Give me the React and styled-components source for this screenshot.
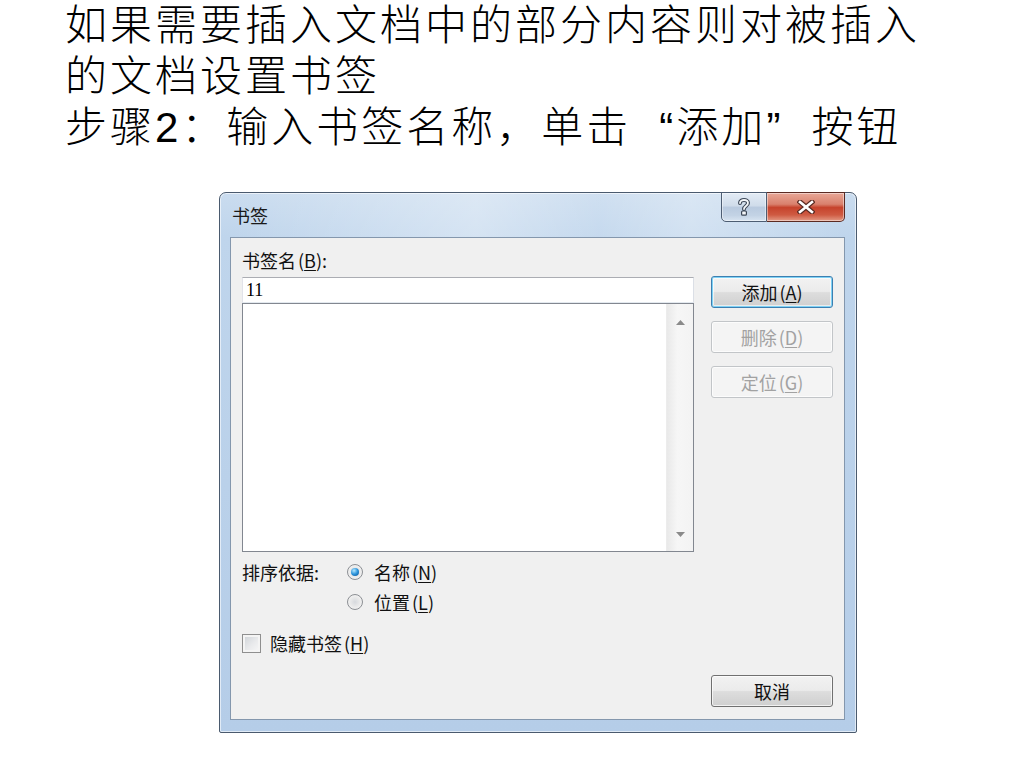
import React from "react";
import styled, { createGlobalStyle } from "styled-components";

const GlobalStyle = createGlobalStyle`
  html, body {
    margin: 0;
    padding: 0;
    background: #fff;
  }
  body {
    font-family: "Noto Sans CJK SC", "Noto Sans", sans-serif;
  }
`;

const Page = styled.div`
  width: 1024px;
  height: 768px;
  overflow: hidden;
  background: #fff;
`;

const Heading = styled.div`
  padding: 0 0 0 65px;
  font-family: "Liberation Sans", "Noto Sans CJK SC", sans-serif;
  font-size: 42px;
  font-weight: 300;
  letter-spacing: 3px;
  line-height: 51px;
  color: #000;

  span {
    display: block;
    white-space: nowrap;
  }
`;

const Quote = styled.i`
  font-style: normal;
  margin-left: ${(p) => (p.$open ? "28px" : "0")};
  margin-right: ${(p) => (p.$open ? "0" : "28px")};
`;

const Window = styled.div`
  margin: 39px 0 0 219px;
  width: 638px;
  height: 541px;
  box-sizing: border-box;
  border: 1px solid #4a5a6e;
  border-radius: 7px 7px 2px 2px;
  background: linear-gradient(180deg, #cadcef 0px, #bfd5ec 44px, #b5cde8 100%);
  box-shadow: inset 0 0 0 1px rgba(255, 255, 255, 0.6);
  padding: 0 11px 12px 10px;
  display: flex;
  flex-direction: column;
`;

const TitleBar = styled.div`
  height: 44px;
  display: flex;
  justify-content: space-between;
  align-items: flex-start;
  background: linear-gradient(
    90deg,
    rgba(255, 255, 255, 0) 0%,
    rgba(255, 255, 255, 0.35) 40%,
    rgba(255, 255, 255, 0.1) 60%,
    rgba(255, 255, 255, 0.3) 75%,
    rgba(255, 255, 255, 0) 100%
  );
`;

const Caption = styled.div`
  padding: 11px 0 0 2px;
  font-size: 18px;
  line-height: 22px;
  color: #1a1a1a;
`;

const CaptionButtons = styled.div`
  display: flex;
  margin-top: -1px;
`;

const CaptionButton = styled.div`
  height: 30px;
  width: ${(p) => (p.$close ? "78px" : "46px")};
  box-sizing: border-box;
  border: 1px solid ${(p) => (p.$close ? "#5b2a22" : "#4d5d72")};
  border-left-width: ${(p) => (p.$close ? "0" : "1px")};
  border-radius: ${(p) => (p.$close ? "0 0 5px 0" : "0 0 0 5px")};
  background: ${(p) =>
    p.$close
      ? "linear-gradient(180deg, #e8a797 0%, #d9816d 40%, #c6432c 52%, #cf5a42 78%, #e39a85 100%)"
      : "linear-gradient(180deg, #e3ebf5 0%, #d0dcea 45%, #b9cadf 52%, #c3d3e5 80%, #d8e4f1 100%)"};
  box-shadow: inset 0 0 0 1px rgba(255, 255, 255, 0.45);
  display: flex;
  align-items: center;
  justify-content: center;
`;

const Client = styled.div`
  flex: 1;
  display: flex;
  gap: 17px;
  background: #f0f0f0;
  border: 1px solid #8497ad;
  padding: 0 11px 12px 11px;
  font-size: 18px;
  color: #111;
`;

const LeftCol = styled.div`
  width: 452px;
  display: flex;
  flex-direction: column;
  padding-top: 12px;
`;

const FieldLabel = styled.div`
  line-height: 20px;
  margin-bottom: 7px;
`;

const Key = styled.span`
  margin-left: 2px;

  u {
    text-decoration: underline;
    text-underline-offset: 2px;
  }
`;

const TextBox = styled.div`
  height: 26px;
  box-sizing: border-box;
  border: 1px solid;
  border-color: #abadb3 #dbdfe6 #e3e9ef #e2e3ea;
  background: #fff;
  padding-left: 3px;
  font-family: "Liberation Serif", "DejaVu Serif", serif;
  font-size: 18px;
  line-height: 24px;
  color: #000;
`;

const ListBox = styled.div`
  height: 249px;
  box-sizing: border-box;
  border: 1px solid #828790;
  background: #fff;
  display: flex;
  justify-content: flex-end;
`;

const ScrollTrack = styled.div`
  width: 26px;
  background: linear-gradient(90deg, #e9e9e9 0%, #f6f6f6 40%, #f3f3f3 100%);
  border-left: 1px solid #ececec;
  display: flex;
  flex-direction: column;
  justify-content: space-between;
  align-items: center;
  padding: 16px 0 14px;
`;

const SortGrid = styled.div`
  margin-top: 5px;
  display: grid;
  grid-template-columns: 105px auto;
  grid-auto-rows: 30px;
  align-items: center;
  line-height: 20px;
`;

const Option = styled.label`
  display: flex;
  align-items: center;
  gap: 11px;
  grid-column: 2;
`;

const Radio = styled.span`
  width: 16px;
  height: 16px;
  border-radius: 50%;
  box-sizing: border-box;
  border: 1px solid #8c8f94;
  background: radial-gradient(circle at 50% 50%, #d6d9dd 0%, #ececec 55%, #f7f7f7 100%);
  display: flex;
  align-items: center;
  justify-content: center;

  &::after {
    content: "";
    display: ${(p) => (p.$checked ? "block" : "none")};
    width: 8px;
    height: 8px;
    border-radius: 50%;
    background: radial-gradient(circle at 38% 32%, #b4e8ff 0%, #2a93db 50%, #0e4f8d 100%);
  }
`;

const CheckRow = styled.label`
  margin-top: 13px;
  height: 26px;
  display: flex;
  align-items: center;
  gap: 9px;
  line-height: 20px;
`;

const CheckBox = styled.span`
  width: 19px;
  height: 19px;
  box-sizing: border-box;
  border: 1px solid #8f8f8f;
  background: linear-gradient(135deg, #cdd1d6 0%, #e9eaec 55%, #f8f8f8 100%);
  box-shadow: inset 0 0 0 2px #f4f4f4;
`;

const RightCol = styled.div`
  width: 122px;
  display: flex;
  flex-direction: column;
  gap: 13px;
  padding-top: 38px;
`;

const Button = styled.div`
  height: 32px;
  box-sizing: border-box;
  border-radius: 3px;
  border: 1px solid ${(p) => (p.$default ? "#3c7fb1" : p.$disabled ? "#c2c5c8" : "#707070")};
  background: ${(p) =>
    p.$disabled
      ? "#f4f4f4"
      : "linear-gradient(180deg, #f2f2f2 0%, #ebebeb 48%, #dddddd 52%, #cfcfcf 100%)"};
  box-shadow: ${(p) =>
    p.$default
      ? "inset 0 0 0 1px #7fd2f5, inset 0 0 0 2px rgba(255,255,255,0.6)"
      : "inset 0 0 0 1px rgba(255,255,255,0.7)"};
  color: ${(p) => (p.$disabled ? "#a2a2a2" : "#111")};
  display: flex;
  align-items: center;
  justify-content: center;
  line-height: 20px;
  margin-top: ${(p) => (p.$bottom ? "auto" : "0")};
`;

const Arrow = ({ up }) => (
  <svg width="9" height="5" viewBox="0 0 9 5">
    <path d={up ? "M0 5 L4.5 0 L9 5 Z" : "M0 0 L4.5 5 L9 0 Z"} fill="#8a8a8a" />
  </svg>
);

const HelpIcon = () => (
  <svg width="14" height="18" viewBox="0 0 14 18">
    <g fill="none" strokeLinecap="round" strokeLinejoin="round">
      <path d="M3 5 C3 1 11 1 11 5 C11 8 7 8 7 11" stroke="#3b4656" strokeWidth="4" />
      <path d="M3 5 C3 1 11 1 11 5 C11 8 7 8 7 11" stroke="#f4f6f9" strokeWidth="1.8" />
    </g>
    <rect x="4.6" y="13" width="4.8" height="4.2" rx="1" fill="#f4f6f9" stroke="#3b4656" strokeWidth="1.2" />
  </svg>
);

const CloseIcon = () => (
  <svg width="18" height="14" viewBox="0 0 18 14">
    <g strokeLinecap="square">
      <path d="M3 2 L15 12 M15 2 L3 12" stroke="#5a2a22" strokeWidth="5" />
      <path d="M3 2 L15 12 M15 2 L3 12" stroke="#ffffff" strokeWidth="2.6" />
    </g>
  </svg>
);

const Mn = ({ k }) => (
  <Key>
    (<u>{k}</u>)
  </Key>
);

export default function App() {
  return (
    <Page>
      <GlobalStyle />
      <Heading>
        <span>如果需要插入文档中的部分内容则对被插入</span>
        <span>的文档设置书签</span>
        <span>
          步骤2：输入书签名称，单击<Quote $open>“</Quote>添加<Quote>”</Quote>按钮
        </span>
      </Heading>

      <Window>
        <TitleBar>
          <Caption>书签</Caption>
          <CaptionButtons>
            <CaptionButton>
              <HelpIcon />
            </CaptionButton>
            <CaptionButton $close>
              <CloseIcon />
            </CaptionButton>
          </CaptionButtons>
        </TitleBar>

        <Client>
          <LeftCol>
            <FieldLabel>
              书签名<Mn k="B" />:
            </FieldLabel>
            <TextBox>11</TextBox>
            <ListBox>
              <ScrollTrack>
                <Arrow up />
                <Arrow />
              </ScrollTrack>
            </ListBox>
            <SortGrid>
              <span>排序依据:</span>
              <Option style={{ gridRow: 1 }}>
                <Radio $checked />
                <span>
                  名称<Mn k="N" />
                </span>
              </Option>
              <Option>
                <Radio />
                <span>
                  位置<Mn k="L" />
                </span>
              </Option>
            </SortGrid>
            <CheckRow>
              <CheckBox />
              <span>
                隐藏书签<Mn k="H" />
              </span>
            </CheckRow>
          </LeftCol>

          <RightCol>
            <Button $default>
              添加<Mn k="A" />
            </Button>
            <Button $disabled>
              删除<Mn k="D" />
            </Button>
            <Button $disabled>
              定位<Mn k="G" />
            </Button>
            <Button $bottom>取消</Button>
          </RightCol>
        </Client>
      </Window>
    </Page>
  );
}
